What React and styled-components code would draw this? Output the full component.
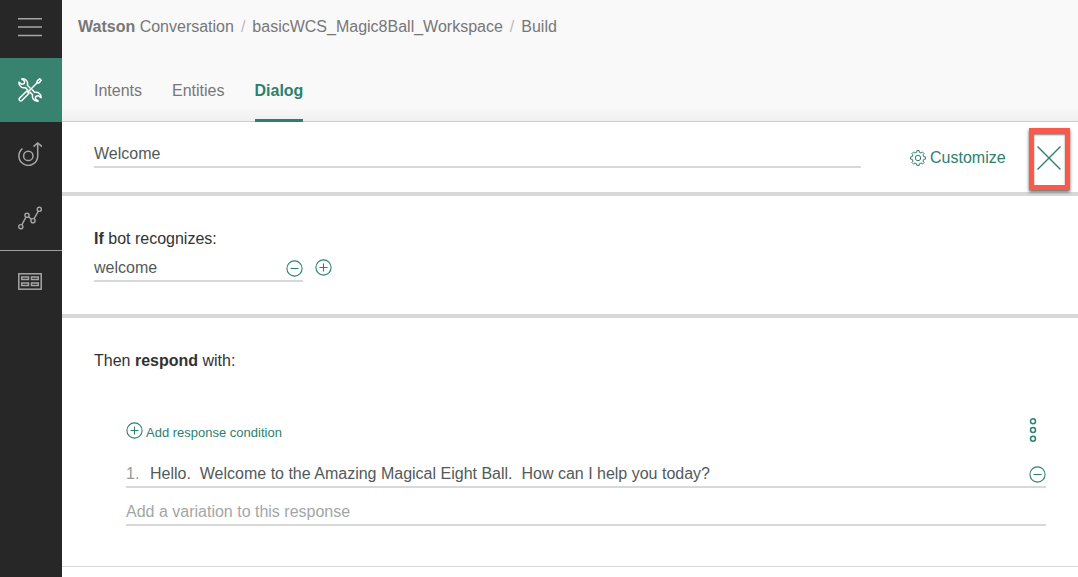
import React, { useState } from "react";
import styled, { createGlobalStyle, css } from "styled-components";

const teal = "#2e806d";
const rule = "#d8d8d8";

const GlobalStyle = createGlobalStyle`
  *, *::before, *::after { box-sizing: border-box; }
  body {
    margin: 0;
    background: #fff;
    color: #323232;
    font: 16px/20px "Helvetica Neue", "Liberation Sans", Arial, sans-serif;
  }
  button, input { font: inherit; color: inherit; }
`;

const Shell = styled.div`
  display: flex;
  min-height: 100vh;
`;

const Sidebar = styled.nav`
  flex: none;
  display: flex;
  flex-direction: column;
  width: 62px;
  background: #272727;
`;

const SideButton = styled.button`
  display: flex;
  align-items: center;
  justify-content: center;
  height: ${(p) => (p.$short ? 58 : 64)}px;
  padding: 0 2px ${(p) => (p.$raised ? 4 : 0)}px 0;
  border: 0;
  background: ${(p) => (p.$active ? "#37836f" : "transparent")};
  color: ${(p) => (p.$active ? "#fff" : "#a6a6a6")};
  cursor: pointer;
  svg { display: block; }
`;

const SideRule = styled.hr`
  width: 100%;
  height: 1px;
  margin: 0;
  border: 0;
  background: #a0a0a0;
`;

const Page = styled.main`
  flex: 1;
  min-width: 0;
`;

const Header = styled.header`
  display: flex;
  flex-direction: column;
  justify-content: space-between;
  height: 122px;
  padding: 17px 16px 0;
  border-bottom: 1px solid #cdcdcd;
  background: linear-gradient(#f9f9f9 calc(100% - 14px), #efefef);
`;

const Crumbs = styled.nav`
  display: flex;
  color: #777;
`;

const Crumb = styled.a`
  color: inherit;
  text-decoration: none;
  white-space: nowrap;
`;

const Slash = styled.span`
  padding: 0 7px;
  color: #bbb;
`;

const Tabs = styled.nav`
  display: flex;
  gap: 30px;
  padding: 0 16px;
  margin-bottom: -1px;
`;

const Tab = styled.a`
  height: 41px;
  border-bottom: 3px solid transparent;
  color: #777;
  text-decoration: none;
  ${(p) =>
    p.$active &&
    css`
      border-color: ${teal};
      border-radius: 2px 2px 0 0;
      color: ${teal};
      font-weight: bold;
    `}
`;

const NodeBar = styled.section`
  display: flex;
  height: 74px;
  padding: 0 8px 0 32px;
  border-bottom: 4px solid ${rule};
`;

const Field = styled.div`
  display: flex;
  align-items: flex-end;
  height: ${(p) => (p.$tall ? 38 : 30)}px;
  padding-bottom: 2px;
  border-bottom: 2px solid ${rule};
  color: #525a58;
`;

const NameField = styled(Field)`
  flex: 1;
  margin-top: 16px;
`;

const TextInput = styled.input`
  flex: 1;
  min-width: 0;
  height: 20px;
  padding: 0;
  border: 0;
  outline: 0;
  background: transparent;
  &::placeholder { color: #a3a6a5; opacity: 1; }
`;

const PlainButton = styled.button`
  display: flex;
  align-items: center;
  min-height: 20px;
  padding: 0;
  border: 0;
  background: none;
  color: ${teal};
  cursor: pointer;
  svg { display: block; flex: none; }
`;

const CustomizeButton = styled(PlainButton)`
  gap: 4px;
  width: 95px;
  height: 70px;
  margin: 0 24px 0 49px;
  padding-top: 2px;
`;

const CloseButton = styled(PlainButton)`
  justify-content: center;
  width: 41px;
  height: 62px;
  margin-top: 6px;
  padding: 0 1px 2px 0;
  border: 5px solid #fb5a4b;
  box-shadow: 0 2px 3px rgba(0, 0, 0, 0.6), inset 0 2px 2px rgba(0, 0, 0, 0.5);
`;

const Condition = styled.section`
  height: 122px;
  padding: 33px 32px;
  border-bottom: 4px solid ${rule};
`;

const Caption = styled.label`
  display: block;
`;

const ConditionRow = styled.div`
  display: flex;
  gap: 12px;
  padding-top: 3px;
`;

const ConditionField = styled(Field)`
  width: 209px;
`;

const Response = styled.section`
  height: 249px;
  padding: 33px 32px;
  border-bottom: 1px solid ${rule};
`;

const Heading = styled.h2`
  margin: 0;
  font-size: 16px;
  font-weight: normal;
  line-height: 20px;
`;

const ResponseBody = styled.div`
  padding: 45px 0 0 32px;
`;

const Toolbar = styled.div`
  display: flex;
  align-items: center;
  justify-content: space-between;
  height: 28px;
  padding-right: 9px;
  margin-bottom: 14px;
`;

const AddCondition = styled(PlainButton)`
  gap: 3px;
  font-size: 13px;
  span { padding-top: 6px; }
`;

const ItemNumber = styled.label`
  width: 24px;
  color: #999;
`;

const RingIcon = ({ plus }) => (
  <svg width="17" height="17" viewBox="0 0 17 17" fill="none" stroke="currentColor" strokeWidth="1.1">
    <circle cx="8.5" cy="8.5" r="7.6" />
    <path d={plus ? "M4.5 8.5h8M8.5 4.5v8" : "M4.5 8.5h8"} />
  </svg>
);

const MenuIcon = () => (
  <svg width="24" height="20" viewBox="0 0 24 20" stroke="currentColor" strokeWidth="1.4">
    <path d="M0 1.8h24M0 10h24M0 18.5h24" />
  </svg>
);

const ToolsIcon = () => (
  <svg width="24" height="24" viewBox="0 0 24 24" fill="none" stroke="currentColor" strokeWidth="1.5" strokeLinejoin="round" strokeLinecap="round">
    <path d="M10 12.2 7.4 9.6C4.2 10.5.8 8.3.9 4.2L3.7 6.4 6.3 5.5 6.6 3.1 3.7.9C7.8.3 10.3 3.3 9.4 7.3L12.1 10" />
    <path d="M14.2 11.8 16.7 14.4C20 13.5 23.2 15.9 23.1 19.7L20.3 17.6 17.7 18.5 17.4 20.9 20.2 23.1C16.2 23.6 13.7 20.7 14.6 16.7L12 14.1" />
    <path d="M8.8 13 11 15.2 3.9 22.5C2.2 23.9.2 21.8 1.6 20.1Z" />
    <path d="M10 14 18.7 5.3 19.3 2.9 21.7.9 23.2 2.3 21.2 4.8 18.7 5.3" />
  </svg>
);

const TargetIcon = () => (
  <svg width="24" height="24" viewBox="0 0 24 24" fill="none" stroke="currentColor" strokeWidth="1.5">
    <circle cx="10.3" cy="13.9" r="4.7" />
    <path d="M4.4 6.6A9.4 9.4 0 1 0 19.7 14V1" />
    <path d="m15.5 4.6 4.2-3.6L24 4.6" />
  </svg>
);

const GraphIcon = () => (
  <svg width="24" height="24" viewBox="0 0 24 24" fill="none" stroke="currentColor" strokeWidth="1.4">
    <circle cx="2.8" cy="20.7" r="2.1" />
    <circle cx="9" cy="9.3" r="2.1" />
    <circle cx="15" cy="14.7" r="2.1" />
    <circle cx="21.3" cy="3.3" r="2.1" />
    <path d="m3.8 18.8 4.200-7.600M10.600 10.700l2.800 2.600M16 12.800l4.300-7.600" />
  </svg>
);

const TableIcon = () => (
  <svg width="24" height="17" viewBox="0 0 24 17" fill="none" stroke="currentColor" strokeWidth="1.5">
    <rect x=".8" y=".8" width="22.4" height="15.4" />
    <path d="M3.700 4h6.800v2.500H3.700zM13.500 4h6.800v2.500h-6.800zM3.700 10h6.800v2.500H3.700zM13.500 10h6.800v2.500h-6.800z" />
  </svg>
);

const GEAR = Array.from({ length: 8 }, (_, i) => {
  const at = (r, deg) => {
    const a = ((i * 45 + deg) * Math.PI) / 180;
    return `${(8 + r * Math.sin(a)).toFixed(2)} ${(8 - r * Math.cos(a)).toFixed(2)}`;
  };
  return `${i ? "L" : "M"}${at(5.9, -13)}L${at(7.5, -9)}L${at(7.5, 9)}L${at(5.9, 13)}`;
}).join("") + "Z";

const GearIcon = () => (
  <svg width="16" height="16" viewBox="0 0 16 16" fill="none" stroke="currentColor" strokeLinejoin="round">
    <path d={GEAR} />
    <circle cx="8" cy="8" r="2.7" />
  </svg>
);

const CloseIcon = () => (
  <svg width="24" height="24" viewBox="0 0 24 24" stroke="currentColor" strokeWidth="1.4">
    <path d="m.5.5 23 23M23.5.5l-23 23" />
  </svg>
);

const DotsIcon = () => (
  <svg width="8" height="26" viewBox="0 0 8 26" fill="none" stroke="currentColor" strokeWidth="1.5">
    <circle cx="4" cy="4.2" r="2.5" />
    <circle cx="4" cy="13" r="2.5" />
    <circle cx="4" cy="21.8" r="2.5" />
  </svg>
);

export default function App() {
  const [name, setName] = useState("Welcome");
  const [condition, setCondition] = useState("welcome");
  const [reply, setReply] = useState(
    "Hello.  Welcome to the Amazing Magical Eight Ball.  How can I help you today?"
  );

  return (
    <>
      <GlobalStyle />
      <Shell>
        <Sidebar aria-label="Primary">
          <SideButton $short $raised aria-label="Menu"><MenuIcon /></SideButton>
          <SideButton $active aria-label="Build"><ToolsIcon /></SideButton>
          <SideButton aria-label="Deploy"><TargetIcon /></SideButton>
          <SideButton aria-label="Improve"><GraphIcon /></SideButton>
          <SideRule />
          <SideButton $raised aria-label="Workspaces"><TableIcon /></SideButton>
        </Sidebar>
        <Page>
          <Header>
            <Crumbs aria-label="Breadcrumb">
              <Crumb href="#home"><b>Watson</b> Conversation</Crumb>
              <Slash>/</Slash>
              <Crumb href="#workspace">basicWCS_Magic8Ball_Workspace</Crumb>
              <Slash>/</Slash>
              <Crumb href="#build">Build</Crumb>
            </Crumbs>
            <Tabs aria-label="Build sections">
              <Tab href="#intents">Intents</Tab>
              <Tab href="#entities">Entities</Tab>
              <Tab href="#dialog" $active aria-current="page">Dialog</Tab>
            </Tabs>
          </Header>

          <NodeBar>
            <NameField>
              <TextInput aria-label="Node name" value={name} onChange={(e) => setName(e.target.value)} />
            </NameField>
            <CustomizeButton><GearIcon />Customize</CustomizeButton>
            <CloseButton aria-label="Close"><CloseIcon /></CloseButton>
          </NodeBar>

          <Condition>
            <Caption htmlFor="condition"><b>If</b> bot recognizes:</Caption>
            <ConditionRow>
              <ConditionField>
                <TextInput id="condition" value={condition} onChange={(e) => setCondition(e.target.value)} />
                <PlainButton aria-label="Remove condition"><RingIcon /></PlainButton>
              </ConditionField>
              <PlainButton aria-label="Add condition"><RingIcon plus /></PlainButton>
            </ConditionRow>
          </Condition>

          <Response>
            <Heading>Then <b>respond</b> with:</Heading>
            <ResponseBody>
              <Toolbar>
                <AddCondition><RingIcon plus /><span>Add response condition</span></AddCondition>
                <PlainButton aria-label="More options"><DotsIcon /></PlainButton>
              </Toolbar>
              <Field>
                <ItemNumber htmlFor="reply">1.</ItemNumber>
                <TextInput id="reply" value={reply} onChange={(e) => setReply(e.target.value)} />
                <PlainButton aria-label="Remove response"><RingIcon /></PlainButton>
              </Field>
              <Field $tall>
                <TextInput aria-label="Response variation" placeholder="Add a variation to this response" />
              </Field>
            </ResponseBody>
          </Response>
        </Page>
      </Shell>
    </>
  );
}
